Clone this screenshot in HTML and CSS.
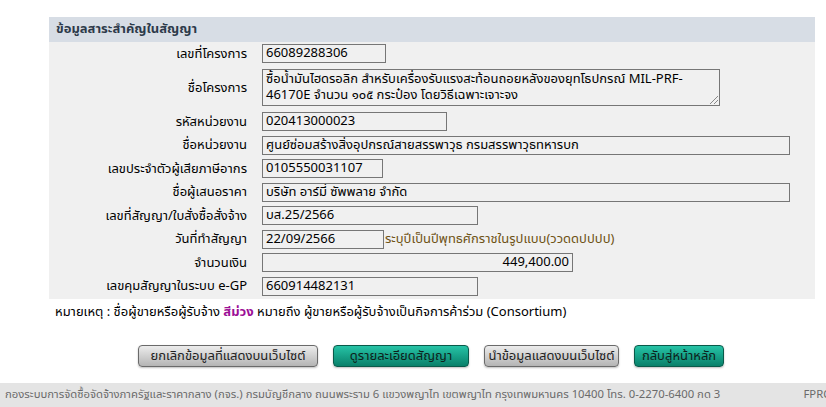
FILE: index.html
```html
<!DOCTYPE html>
<html lang="th">
<head>
  <meta charset="UTF-8">
  <title>ข้อมูลสาระสำคัญในสัญญา</title>
  <link rel="stylesheet" href="styles.css">
</head>
<body>

  <div class="panel">
    <div class="panel-head">ข้อมูลสาระสำคัญในสัญญา</div>

    <div class="row">
      <div class="label">เลขที่โครงการ</div>
      <div class="field w124">66089288306</div>
    </div>
    <div class="row tall">
      <div class="label">ชื่อโครงการ</div>
      <div class="field area">ซื้อน้ำมันไฮดรอลิก สำหรับเครื่องรับแรงสะท้อนถอยหลังของยุทโธปกรณ์ MIL-PRF-46170E จำนวน ๑๐๕ กระป๋อง โดยวิธีเฉพาะเจาะจง<span class="grip"></span></div>
    </div>
    <div class="row">
      <div class="label">รหัสหน่วยงาน</div>
      <div class="field w185">020413000023</div>
    </div>
    <div class="row">
      <div class="label">ชื่อหน่วยงาน</div>
      <div class="field w528">ศูนย์ซ่อมสร้างสิ่งอุปกรณ์สายสรรพาวุธ กรมสรรพาวุธทหารบก</div>
    </div>
    <div class="row">
      <div class="label">เลขประจำตัวผู้เสียภาษีอากร</div>
      <div class="field w121">0105550031107</div>
    </div>
    <div class="row">
      <div class="label">ชื่อผู้เสนอราคา</div>
      <div class="field w528">บริษัท อาร์มี่ ซัพพลาย จำกัด</div>
    </div>
    <div class="row">
      <div class="label">เลขที่สัญญา/ใบสั่งซื้อสั่งจ้าง</div>
      <div class="field w216">บส.25/2566</div>
    </div>
    <div class="row">
      <div class="label">วันที่ทำสัญญา</div>
      <div class="field w122">22/09/2566</div>
      <div class="hint">ระบุปีเป็นปีพุทธศักราชในรูปแบบ(ววดดปปปป)</div>
    </div>
    <div class="row">
      <div class="label">จำนวนเงิน</div>
      <div class="field w311 num">449,400.00</div>
    </div>
    <div class="row">
      <div class="label">เลขคุมสัญญาในระบบ e-GP</div>
      <div class="field w216">660914482131</div>
    </div>
  </div>

  <div class="note">
    หมายเหตุ : ชื่อผู้ขายหรือผู้รับจ้าง <span class="purple">สีม่วง</span> หมายถึง ผู้ขายหรือผู้รับจ้างเป็นกิจการค้าร่วม (Consortium)
  </div>

  <div class="buttons">
    <div class="btn grey w180">ยกเลิกข้อมูลที่แสดงบนเว็บไซต์</div>
    <div class="btn teal w136">ดูรายละเอียดสัญญา</div>
    <div class="btn grey w135">นำข้อมูลแสดงบนเว็บไซต์</div>
    <div class="btn teal w90">กลับสู่หน้าหลัก</div>
  </div>

  <div class="footer">
    <span>กองระบบการจัดซื้อจัดจ้างภาครัฐและราคากลาง (กจร.) กรมบัญชีกลาง ถนนพระราม 6 แขวงพญาไท เขตพญาไท กรุงเทพมหานคร 10400 โทร. 0-2270-6400 กด 3</span>
    <span class="fpro">FPRO</span>
  </div>

</body>
</html>
```

FILE: styles.css
```css
* {
  margin: 0;
  padding: 0;
  box-sizing: border-box;
}

body {
  background-color: #ffffff;
  font-family: Tahoma, "Noto Sans Thai", "Noto Sans", "DejaVu Sans", sans-serif;
  font-size: 13px;
  color: #000;
  padding-top: 17px;
  height: 407px;
  overflow: hidden;
  display: flex;
  flex-direction: column;
}

.panel {
  margin-left: 49px;
  width: 766px;
  background-color: #f0f0f0;
  padding-bottom: 1px;
}

.panel-head {
  height: 25px;
  line-height: 25px;
  background-color: #d7dde5;
  padding-left: 7px;
  font-weight: bold;
  color: #2d3a4a;
}

.row {
  display: flex;
  align-items: center;
  height: 23.5px;
}

.row:nth-child(2) {
  height: 23px;
}

.row.tall {
  height: 45px;
}

.label {
  width: 198px;
  text-align: right;
  margin-right: 15px;
  white-space: nowrap;
}

.field {
  height: 19px;
  line-height: 17px;
  border: 1px solid #767676;
  padding: 0 3px;
  white-space: nowrap;
  overflow: hidden;
}

.field.area {
  position: relative;
  width: 458px;
  height: 37px;
  white-space: normal;
  line-height: 16px;
  padding-top: 1px;
}

.grip {
  position: absolute;
  right: 1px;
  bottom: 1px;
  width: 8px;
  height: 8px;
  background: linear-gradient(135deg, transparent 45%, #888 45%, #888 55%, transparent 55%, transparent 70%, #888 70%, #888 78%, transparent 78%);
}

.num {
  text-align: right;
}

.w121 { width: 121px; }
.w122 { width: 122px; }
.w124 { width: 124px; }
.w185 { width: 185px; }
.w216 { width: 216px; }
.w311 { width: 311px; }
.w528 { width: 528px; }

.hint {
  color: #6e5214;
  margin-left: 1px;
  white-space: nowrap;
}

.note {
  margin-left: 55px;
  margin-top: 3px;
  height: 20px;
  line-height: 20px;
}

.purple {
  color: #9c0f96;
  font-weight: bold;
}

.buttons {
  display: flex;
  gap: 15px;
  margin-left: 138px;
  margin-top: 23px;
}

.btn {
  height: 22px;
  line-height: 20px;
  text-align: center;
  border-radius: 4px;
  border: 1px solid #6a6a6a;
  white-space: nowrap;
  box-shadow: 0 1px 2px rgba(0,0,0,0.25);
}

.btn.grey {
  background: linear-gradient(#ececec, #b4b4b4);
  color: #222;
}

.btn.teal {
  background: linear-gradient(#26c3a6, #08806a);
  border-color: #0a5a4a;
  color: #0d1f1b;
}

.w180 { width: 180px; }
.w136 { width: 136px; }
.w135 { width: 135px; }
.w90 { width: 90px; }

.footer {
  margin-top: auto;
  height: 24px;
  line-height: 24px;
  background-color: #e4e4e4;
  color: #6a6a6a;
  font-size: 11.3px;
  padding-left: 5px;
  display: flex;
  white-space: nowrap;
  overflow: hidden;
}

.fpro {
  margin-left: auto;
  padding-left: 40px;
  margin-right: -6px;
}
```
